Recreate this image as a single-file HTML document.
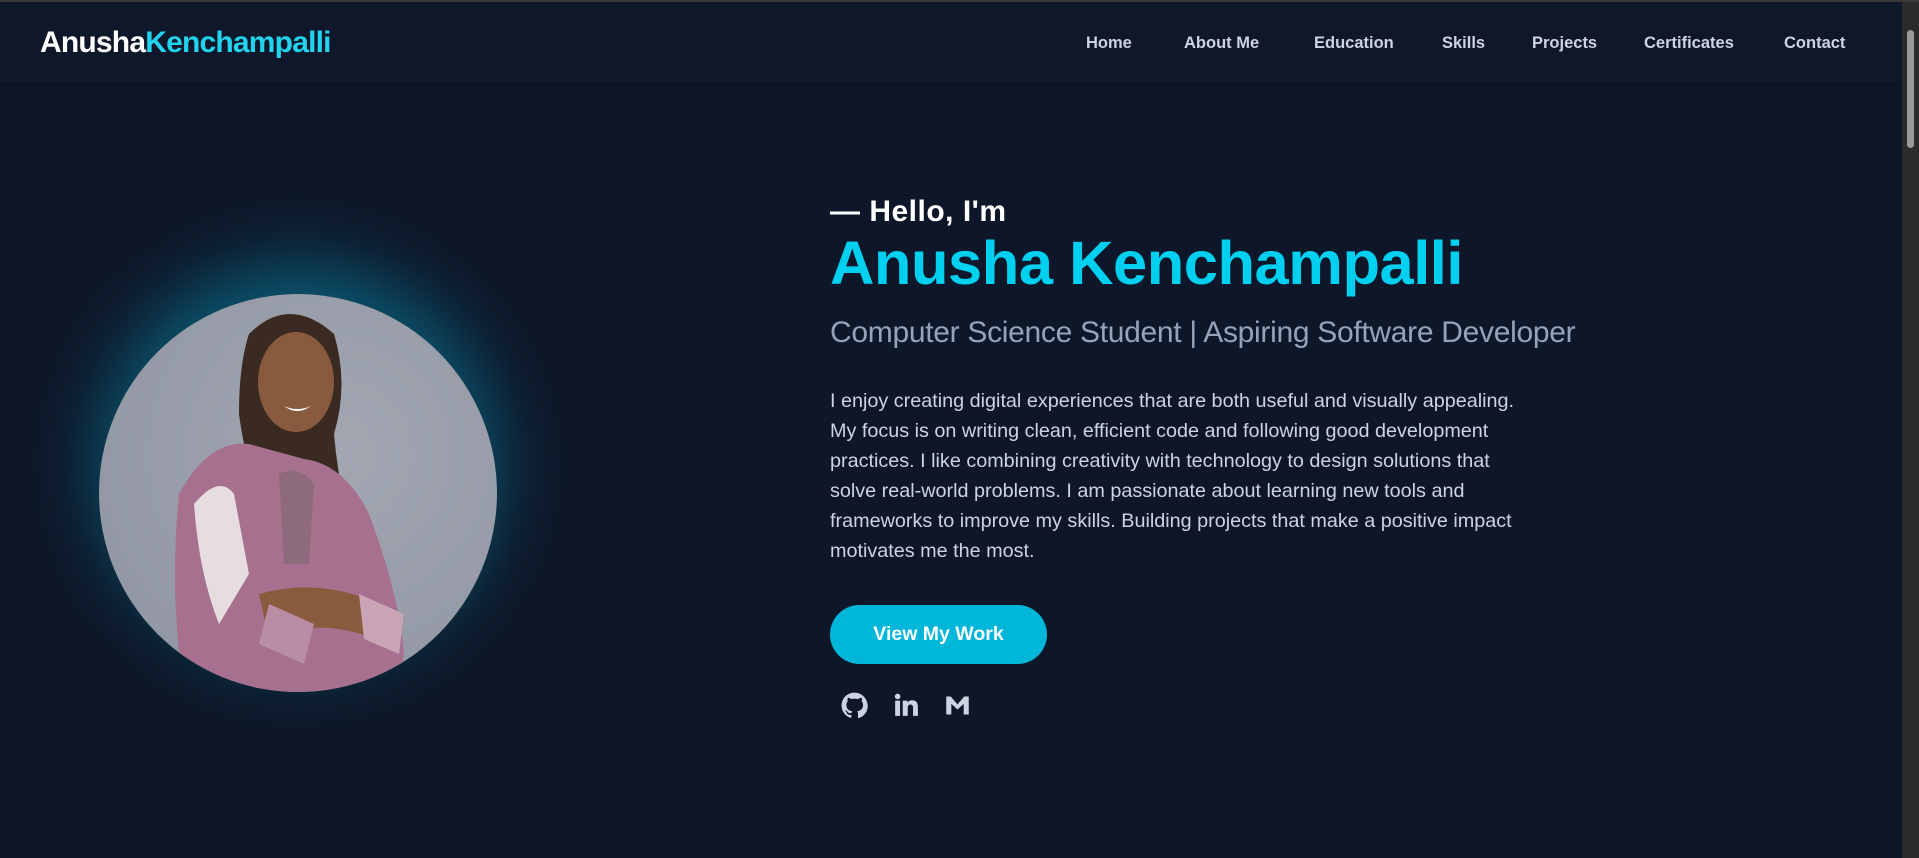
<!DOCTYPE html>
<html><head><meta charset="utf-8"><style>
*{margin:0;padding:0;box-sizing:border-box}
html,body{width:1919px;height:858px;overflow:hidden;background:#0e1729;font-family:"Liberation Sans",sans-serif}
.top{position:absolute;left:0;top:0;width:1919px;height:2px;background:#3b3b3b}
.nav{position:absolute;left:0;top:2px;width:1902px;height:81px;background:#0f172a;box-shadow:0 1px 6px rgba(0,0,0,.3)}
.logo{position:absolute;left:40px;top:24px;font-size:30px;font-weight:bold;color:#fff;letter-spacing:-0.8px}
.logo span{color:#22d3ee}
.links{position:absolute;top:32px;font-size:16.5px;font-weight:bold;color:#cbd5e1}
.sb{position:absolute;right:0;top:2px;width:17px;height:856px;background:#2b2b2b}
.sb i{position:absolute;left:5px;top:28px;width:7px;height:118px;background:#9a9a9a;border-radius:4px}
.glow{position:absolute;left:99px;top:294px;width:398px;height:398px;border-radius:50%;box-shadow:0 -30px 70px rgba(8,145,178,.55)}
.photo{position:absolute;left:99px;top:294px;width:398px;height:398px;border-radius:50%;overflow:hidden;background:radial-gradient(circle at 60% 40%,#a2a7b2,#8d939f)}
.t{position:absolute;left:830px;white-space:nowrap}
.hello{top:195px;font-size:30px;font-weight:900;color:#fff;letter-spacing:0.5px}
.name{top:228px;font-size:61.5px;font-weight:900;color:#00d0f0;letter-spacing:-0.5px}
.sub{top:316px;font-size:30px;color:#94a3b8;letter-spacing:-0.3px}
.para{top:386px;font-size:19.8px;line-height:30px;color:#cbd5e1}
.btn{position:absolute;left:830px;top:605px;width:217px;height:59px;border-radius:30px;background:#00b7da;color:#fff;font-weight:bold;font-size:19.5px;text-align:center;line-height:59px}
.ic{position:absolute;top:692px}
</style></head><body>
<div class="top"></div>
<div class="nav">
<div class="logo">Anusha<span>Kenchampalli</span></div>
<div class="links" style="left:1086px">Home</div>
<div class="links" style="left:1184px">About Me</div>
<div class="links" style="left:1314px">Education</div>
<div class="links" style="left:1442px">Skills</div>
<div class="links" style="left:1532px">Projects</div>
<div class="links" style="left:1644px">Certificates</div>
<div class="links" style="left:1784px">Contact</div>
</div>
<div class="sb"><i></i></div>
<div class="glow"></div>
<div class="photo"><svg width="398" height="398" viewBox="0 0 398 398">
<path d="M150 40 Q190 0 235 40 Q250 90 235 140 Q240 200 260 260 L200 300 Q150 200 140 120 Q140 70 150 40Z" fill="#3a2a22"/>
<ellipse cx="197" cy="88" rx="38" ry="50" fill="#8a5a3e"/>
<path d="M185 112 Q198 122 212 112 Q198 118 185 112Z" fill="#fff"/>
<path d="M80 200 Q110 145 150 150 L205 165 Q245 170 270 220 Q300 300 305 360 L300 398 L85 398 Q70 300 80 200Z" fill="#a7708f"/>
<path d="M95 210 Q120 180 135 200 L150 280 L120 330 Q100 280 95 210Z" fill="#e6dde0"/>
<path d="M160 300 Q230 280 300 320 L290 350 Q220 320 170 345Z" fill="#8a5a3e"/>
<path d="M170 310 L215 330 L205 370 L160 350Z" fill="#b98ea5"/>
<path d="M260 300 L305 320 L300 360 L265 345Z" fill="#c9a4b5"/>
<path d="M180 180 Q200 170 215 190 L210 270 L185 270Z" fill="#8e6b7c"/>
</svg></div>
<div class="t hello">— Hello, I'm</div>
<div class="t name">Anusha Kenchampalli</div>
<div class="t sub">Computer Science Student | Aspiring Software Developer</div>
<div class="t para">I enjoy creating digital experiences that are both useful and visually appealing.<br>My focus is on writing clean, efficient code and following good development<br>practices. I like combining creativity with technology to design solutions that<br>solve real-world problems. I am passionate about learning new tools and<br>frameworks to improve my skills. Building projects that make a positive impact<br>motivates me the most.</div>
<div class="btn">View My Work</div>
<svg class="ic" style="left:841px" width="27" height="27" viewBox="0 0 24 24"><path fill="#cbd5e1" d="M12 .5C5.6.5.5 5.6.5 12c0 5.1 3.3 9.4 7.9 10.9.6.1.8-.3.8-.6v-2c-3.2.7-3.9-1.5-3.9-1.5-.5-1.3-1.3-1.7-1.3-1.7-1.100-.7.1-.7.1-.7 1.2.1 1.8 1.2 1.8 1.2 1 1.8 2.8 1.3 3.5 1 .1-.8.4-1.3.7-1.6-2.6-.3-5.3-1.3-5.3-5.7 0-1.3.5-2.300 1.2-3.1-.1-.3-.5-1.5.1-3.1 0 0 1-.3 3.2 1.2a11 11 0 015.8 0c2.2-1.5 3.2-1.2 3.2-1.2.6 1.6.2 2.8.1 3.1.7.8 1.2 1.8 1.2 3.1 0 4.4-2.7 5.4-5.3 5.7.4.4.8 1.1.8 2.2v3.3c0 .3.2.7.8.6 4.6-1.5 7.9-5.8 7.9-10.9C23.5 5.6 18.4.5 12 .5z"/></svg>
<svg class="ic" style="left:893px" width="26" height="26" viewBox="0 0 24 24"><path fill="#cbd5e1" d="M2 8h4.5v14H2zM4.25 1.5a2.6 2.6 0 110 5.2 2.6 2.6 0 010-5.2zM9 8h4.3v1.9c.6-1.1 2.1-2.3 4.3-2.3 4.6 0 5.4 3 5.4 6.9V22h-4.5v-6.8c0-1.6 0-3.7-2.3-3.7s-2.6 1.8-2.6 3.6V22H9z"/></svg>
<svg class="ic" style="left:944px" width="27" height="27" viewBox="0 0 24 24"><path fill="#cbd5e1" d="M2 4h4l6 7 6-7h4v16h-4.5V10.5L12 15.5 6.5 10.5V20H2z"/></svg>
</body></html>
